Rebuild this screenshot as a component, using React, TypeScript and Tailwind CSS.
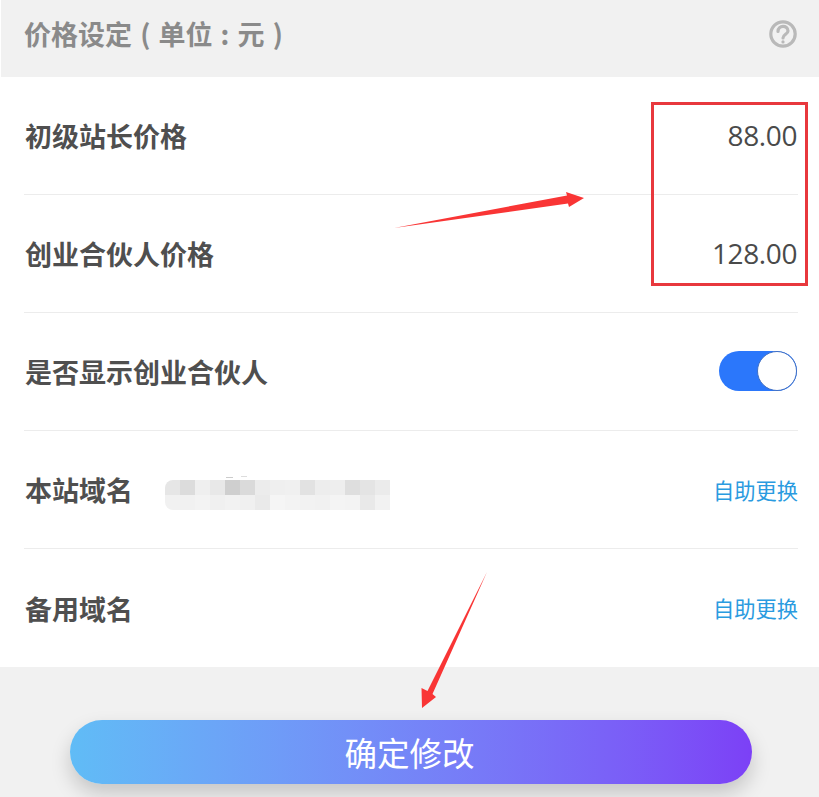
const mosaicTop = ['#e6e6e6', '#dcdcdc', '#efefef', '#e8e8e8', '#cfcfcf', '#dadada', '#ececec', '#efefef', '#f0f0f0', '#e2e2e2', '#ededed', '#eeeeee', '#dedede', '#e4e4e4', '#ebebeb']
const mosaicBottom = ['#f1f1f1', '#f1f1f1', '#f3f3f3', '#f0f0f0', '#f2f2f2', '#f0f0f0', '#eaeaea', '#f5f5f5', '#f3f3f3', '#f2f2f2', '#f1f1f1', '#f4f4f4', '#f3f3f3', '#e9e9e9', '#f2f2f2']

function Row({ label, children, last }: { label: string; children: React.ReactNode; last?: boolean }) {
  return (
    <div className={`flex h-[118px] items-center justify-between ${last ? '' : 'border-b border-[#ececec]'}`}>
      <span className="ml-px text-[27px] font-bold leading-none text-[#4f4f4f]">{label}</span>
      {children}
    </div>
  )
}

function Annotations() {
  return (
    <>
      <div className="absolute left-[651px] top-[102px] h-[184px] w-[157px] border-[3px] border-[#e8383d]" />
      <svg className="absolute left-0 top-0" width="819" height="797" viewBox="0 0 819 797" fill="#f93535">
        <path d="M394 228 L567 195.5 L566 192 L584 198 L569 207 L568 203.5 Z" />
        <path d="M487 572 L432.5 694 L436 697 L422 708 L421.5 688 L427.5 691 Z" />
        <rect x="226" y="477" width="7" height="1" fill="#cccccc" />
        <rect x="241" y="476" width="6" height="1" fill="#dddddd" />
      </svg>
    </>
  )
}

export default function App() {
  return (
    <div className="relative h-[797px] w-[819px] overflow-hidden bg-[#f1f1f1] font-['Noto_Sans_CJK_SC','Open_Sans',sans-serif]">
      <div className="flex h-[77px] items-center justify-between border-l border-white pb-[10px] pl-[23px] pr-[22px]">
        <span className="text-[27px] font-bold leading-none text-[#8a8a8a] [word-spacing:2px]">价格设定 ( 单位 : 元 )</span>
        <svg width="28" height="28" viewBox="0 0 28 28" fill="none" stroke="#b9b9b9" strokeWidth="3.2" strokeLinecap="round">
          <circle cx="14" cy="14" r="12.2" />
          <path d="M9 11.5 C9 4.8 19 4.8 19 11 C19 14.2 14 14.5 14 18" />
          <path d="M14 21.8 V22" />
        </svg>
      </div>

      <div className="bg-white pl-[24px] pr-[21px]">
        <Row label="初级站长价格">
          <span className="mb-[2px] mr-px font-['Open_Sans',sans-serif] text-[28px] leading-none tracking-[-0.4px] text-[#4a4a4a]">88.00</span>
        </Row>
        <Row label="创业合伙人价格">
          <span className="mb-[2px] mr-px font-['Open_Sans',sans-serif] text-[28px] leading-none tracking-[-0.4px] text-[#4a4a4a]">128.00</span>
        </Row>
        <Row label="是否显示创业合伙人">
          <div className="mb-px mr-px flex h-10 w-[78px] justify-end rounded-full bg-[#2b77fb]">
            <div className="h-10 w-10 rounded-full border border-[#3f6fc4] bg-white" />
          </div>
        </Row>
        <Row label="本站域名">
          <div className="ml-[32px] mr-auto mt-[10px] flex h-[30px] flex-col overflow-hidden rounded-l-lg">
            <div className="flex h-[15px]">
              {mosaicTop.map((c, i) => (
                <div key={i} className="h-[15px] w-[15px]" style={{ backgroundColor: c }} />
              ))}
            </div>
            <div className="flex h-[15px]">
              {mosaicBottom.map((c, i) => (
                <div key={i} className="h-[15px] w-[15px]" style={{ backgroundColor: c }} />
              ))}
            </div>
          </div>
          <span className="text-[21.25px] leading-none text-[#2a9be0]">自助更换</span>
        </Row>
        <Row label="备用域名" last>
          <span className="text-[21.25px] leading-none text-[#2a9be0]">自助更换</span>
        </Row>
      </div>

      <div className="px-[70px] pt-[53px]">
        <button className="flex h-16 w-[682px] items-center justify-center rounded-[32px] bg-gradient-to-r from-[#60bcf6] to-[#7c40f6] pr-[3px] text-[32.5px] leading-none text-white shadow-[0_10px_20px_rgba(0,0,0,0.18)]">
          确定修改
        </button>
      </div>

      <Annotations />
    </div>
  )
}
